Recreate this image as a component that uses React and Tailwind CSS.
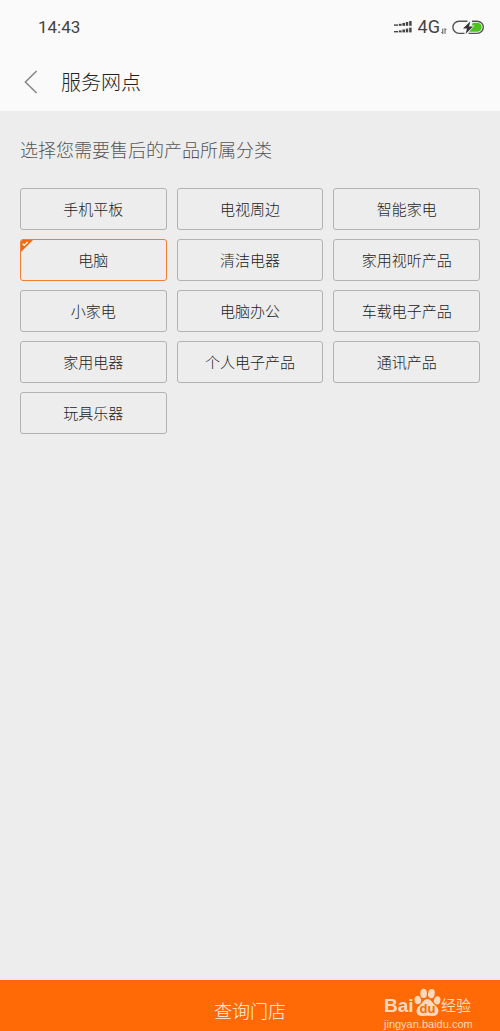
import { useState } from 'react'
import clsx from 'clsx'

const categories = [
  '手机平板', '电视周边', '智能家电',
  '电脑', '清洁电器', '家用视听产品',
  '小家电', '电脑办公', '车载电子产品',
  '家用电器', '个人电子产品', '通讯产品',
  '玩具乐器',
]

function SignalIcon() {
  return (
    <svg className="w-[18px] h-3" viewBox="0 0 18 12" fill="#444" aria-hidden="true">
      <rect x="0" y="3.4" width="4" height="1.4" />
      <rect x="4.8" y="2.8" width="2.8" height="2" />
      <rect x="8.4" y="1.9" width="2.6" height="2.9" />
      <rect x="11.8" y="1" width="2.4" height="3.8" />
      <rect x="15.2" y="0" width="2.4" height="4.8" />
      <rect x="0" y="10" width="4" height="1.4" />
      <rect x="4.8" y="9.4" width="2.8" height="2" />
      <rect x="8.4" y="8.5" width="2.6" height="2.9" />
      <rect x="11.8" y="7.6" width="2.4" height="3.8" />
      <rect x="15.2" y="6.6" width="2.4" height="4.8" />
    </svg>
  )
}

function DataArrows() {
  return (
    <svg className="w-[6px] h-[6px]" viewBox="0 0 6 6" fill="none" stroke="#444" strokeWidth="0.9" aria-hidden="true">
      <path d="M1.8 0.6v5L0.4 4M4 5.8V0.6L5.4 2" />
    </svg>
  )
}

function BatteryIcon() {
  return (
    <svg className="w-8 h-[15px]" viewBox="0 0 32 15" fill="none" aria-hidden="true">
      <path d="M15.5 1.2H7a6 6 0 0 0 0 12.2h5.5M20 1.2h5.2a6.1 6.1 0 0 1 0 12.2H16.5" stroke="#555" strokeWidth="1.4" />
      <path d="M20.8 2.8h4.4a4.5 4.5 0 0 1 0 9H17.2l5.2-6.2h-2.8z" fill="#4bc51d" />
      <path d="M18.4 1.2 11 8.6h4L13.6 14l7.4-7.6h-4z" fill="#333" />
    </svg>
  )
}

function StatusBar() {
  return (
    <div className="h-[54px] pl-[38px] pr-4 flex items-center justify-between font-['Roboto',sans-serif] font-normal text-[17px] leading-5 text-[#444]">
      <span>14:43</span>
      <div className="flex items-center">
        <SignalIcon />
        <span className="ml-[6px] text-[18px]">4G</span>
        <span className="ml-px pt-2">
          <DataArrows />
        </span>
        <span className="ml-[5px]">
          <BatteryIcon />
        </span>
      </div>
    </div>
  )
}

function CategoryButton({ label, selected, onClick }) {
  return (
    <button
      type="button"
      aria-pressed={selected}
      onClick={onClick}
      className={clsx(
        'relative h-[42px] rounded-[3px] border text-[15px] leading-5 text-[#222] cursor-pointer overflow-hidden',
        selected ? 'border-[#f08030]' : 'border-[#b2b2b2]'
      )}
    >
      {selected && (
        <svg className="absolute top-0 left-0 w-3 h-3" viewBox="0 0 12 12" aria-hidden="true">
          <path d="M0 0h12L0 12z" fill="#f26a10" />
          <path d="M1.6 3.8 3.2 5.4 6.6 2" fill="none" stroke="#fff" strokeWidth="1.3" />
        </svg>
      )}
      {label}
    </button>
  )
}

function Watermark() {
  return (
    <div className="absolute left-[384px] bottom-px font-['Liberation_Sans','Noto_Sans_CJK_SC',sans-serif] font-normal text-[#ffd9bd]">
      <div className="flex items-end">
        <span className="w-[30px] font-bold text-[19px] leading-[22px]">Bai</span>
        <span className="relative w-[27px] h-[29px]">
          <svg className="w-[27px] h-[29px]" viewBox="0 0 27 29" fill="currentColor" aria-hidden="true">
            <ellipse cx="3.8" cy="12" rx="3.2" ry="4.2" transform="rotate(-12 3.8 12)" />
            <ellipse cx="9.6" cy="5.4" rx="3.3" ry="4.6" />
            <ellipse cx="17.4" cy="5.6" rx="3.3" ry="4.6" transform="rotate(10 17.4 5.6)" />
            <ellipse cx="23.2" cy="12.4" rx="3.2" ry="4.2" transform="rotate(12 23.2 12.4)" />
            <path d="M13.4 11c3.4 0 4.6 3.2 7 5.6 2.6 2.4 4.6 4.6 3.8 7.6-.8 3-3.2 4-6.2 3.8-3-.2-6-.2-9 0-3.4.2-5.8-1-6.4-3.8-.6-3 1.4-5.4 3.8-7.6C9 14.2 10 11 13.4 11z" />
          </svg>
          <span className="absolute inset-x-0 bottom-0 text-center font-bold text-[13px] leading-4 text-[#ff6a06]">du</span>
        </span>
        <span className="text-[15px] leading-[22px]">经验</span>
      </div>
      <div className="mt-px text-[11px] leading-3">jingyan.baidu.com</div>
    </div>
  )
}

export default function App() {
  const [selected, setSelected] = useState('电脑')

  return (
    <div className="min-h-screen flex flex-col bg-[#ededed] font-light font-['Noto_Sans_CJK_SC',sans-serif]">
      <header className="bg-[#fafafa]">
        <StatusBar />
        <div className="h-[57px] pl-6 pb-[2px] flex items-center">
          <button type="button" aria-label="返回" className="w-[14px] cursor-pointer">
            <svg className="w-[14px] h-6" viewBox="0 0 14 24" fill="none" stroke="#888" strokeWidth="1.6" aria-hidden="true">
              <path d="M12.6 1 1.4 12l11.2 11" />
            </svg>
          </button>
          <h1 className="ml-[23px] text-[20px] leading-6 text-[#222]">服务网点</h1>
        </div>
      </header>

      <main className="flex-1 px-5 pt-[26px]">
        <h2 className="text-[18px] leading-6 text-[#555]">选择您需要售后的产品所属分类</h2>
        <div className="mt-[27px] grid grid-cols-3 gap-x-[10px] gap-y-[9px]">
          {categories.map((label) => (
            <CategoryButton
              key={label}
              label={label}
              selected={label === selected}
              onClick={() => setSelected(label)}
            />
          ))}
        </div>
      </main>

      <footer className="relative bg-[#ff6a06]">
        <button type="button" className="w-full pt-[18px] pb-[9px] text-[18px] leading-6 text-[#fff4e8] cursor-pointer">
          查询门店
        </button>
        <Watermark />
      </footer>
    </div>
  )
}
